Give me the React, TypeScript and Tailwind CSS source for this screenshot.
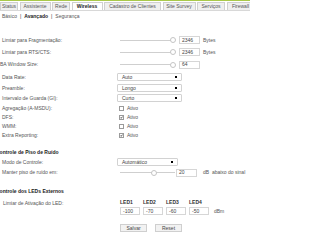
import React from "react";

const tabs = [
  { label: "Status", w: "w-[18px]" },
  { label: "Assistente", w: "w-[31px]" },
  { label: "Rede", w: "w-[18px]" },
  { label: "Wireless", w: "w-[31px]", active: true },
  { label: "Cadastro de Clientes", w: "w-[57px]" },
  { label: "Site Survey", w: "w-[33px]" },
  { label: "Serviços", w: "w-[28px]" },
  { label: "Firewall", w: "w-[28px]" },
];

const Slider = ({ pos, width }: { pos: number; width: string }) => (
  <div className={`relative flex h-[6px] items-center ${width}`}>
    <div className="h-px w-full bg-[#cfcfcf]" />
    <div
      className="absolute top-0 h-[6px] w-[6px] -translate-x-1/2 rounded-full border border-[#c4c4c4] bg-white"
      style={{ left: `${pos}%` }}
    />
  </div>
);

const Box = ({ value, w = "w-[21px]" }: { value: string; w?: string }) => (
  <div className={`flex h-[8px] items-center border border-[#d6d6d6] bg-white px-[2px] text-[#444] ${w}`}>
    {value}
  </div>
);

const Select = ({ value, w = "w-[65px]" }: { value: string; w?: string }) => (
  <div className={`flex h-[8px] items-center justify-between rounded-[1px] border border-[#d2d2d2] bg-white pl-[4px] pr-[4px] text-[#444] ${w}`}>
    <span>{value}</span>
    <span className="h-[2px] w-[2px] bg-black" />
  </div>
);

const Check = ({ checked }: { checked?: boolean }) => (
  <div className="flex h-[5px] w-[5px] items-center justify-center border border-[#9a9a9a] bg-white">
    {checked && (
      <svg viewBox="0 0 6 6" className="h-[5px] w-[5px]">
        <path d="M1 3.2 L2.4 4.6 L5 1.2" stroke="#111" strokeWidth="1.4" fill="none" />
      </svg>
    )}
  </div>
);

const Row = ({ label, h, children, shift }: { label: string; h: string; children?: React.ReactNode; shift?: boolean }) => (
  <div className={`flex items-center ${h}`}>
    <div className={`w-[117px] shrink-0 ${shift ? "pl-0" : "pl-[2px]"}`}>{label}</div>
    <div className="flex items-center">{children}</div>
  </div>
);

export default function App() {
  return (
    <div className="h-[236px] w-[250px] overflow-hidden bg-white text-[5px] leading-none text-[#555] [font-family:'Liberation_Sans',Arial,sans-serif]">
      <div className="h-px bg-[#a9c94a]" />
      <div className="flex h-[10px] items-stretch gap-[1.5px] border-b border-[#d8d8d8] pt-px">
        {tabs.map((t) => (
          <div
            key={t.label}
            className={`flex shrink-0 items-center justify-center border border-b-0 border-[#d0d0d0] whitespace-nowrap ${t.w} ${
              t.active ? "bg-white font-bold text-[#222]" : "bg-[#efefef] text-[#555]"
            }`}
          >
            {t.label}
          </div>
        ))}
      </div>

      <div className="flex h-[10px] items-center gap-[3px] pl-[2px]">
        <span>Básico</span>
        <span className="text-[#333]">|</span>
        <span className="font-bold text-[#222]">Avançado</span>
        <span className="text-[#333]">|</span>
        <span>Segurança</span>
      </div>

      <div className="h-[13px]" />

      <Row label="Limiar para Fragmentação:" h="h-[12px]">
        <div className="ml-[3px]"><Slider pos={100} width="w-[53px]" /></div>
        <div className="ml-[6px]"><Box value="2346" /></div>
        <span className="ml-[3px]">Bytes</span>
      </Row>
      <Row label="Limiar para RTS/CTS:" h="h-[12px]">
        <div className="ml-[3px]"><Slider pos={100} width="w-[53px]" /></div>
        <div className="ml-[6px]"><Box value="2346" /></div>
        <span className="ml-[3px]">Bytes</span>
      </Row>
      <Row label="BA Window Size:" h="h-[13px]" shift>
        <div className="ml-[3px]"><Slider pos={100} width="w-[53px]" /></div>
        <div className="ml-[6px]"><Box value="64" /></div>
      </Row>
      <Row label="Data Rate:" h="h-[12px]">
        <Select value="Auto" />
      </Row>
      <Row label="Preamble:" h="h-[10px]">
        <Select value="Longo" />
      </Row>
      <Row label="Intervalo de Guarda (GI):" h="h-[10px]">
        <Select value="Curto" />
      </Row>
      <Row label="Agregação (A-MSDU):" h="h-[10px]">
        <div className="ml-[2px] flex items-center gap-[3px]"><Check /><span>Ativo</span></div>
      </Row>
      <Row label="DFS:" h="h-[9px]">
        <div className="ml-[2px] flex items-center gap-[3px]"><Check checked /><span>Ativo</span></div>
      </Row>
      <Row label="WMM:" h="h-[9px]">
        <div className="ml-[2px] flex items-center gap-[3px]"><Check /><span>Ativo</span></div>
      </Row>
      <Row label="Extra Reporting:" h="h-[9px]">
        <div className="ml-[2px] flex items-center gap-[3px]"><Check checked /><span>Ativo</span></div>
      </Row>

      <div className="mt-[7px] flex h-[10px] items-center pl-[0px] font-bold text-[#222] -ml-[4px]">
        Controle de Piso de Ruído
      </div>
      <Row label="Modo de Controle:" h="h-[10px]">
        <Select value="Automático" w="w-[61px]" />
      </Row>
      <Row label="Manter piso de ruído em:" h="h-[11px]">
        <div className="ml-[3px]"><Slider pos={62} width="w-[55px]" /></div>
        <div className="ml-[1px]"><Box value="20" /></div>
        <span className="ml-[6px]">dB &nbsp;abaixo do sinal</span>
      </Row>

      <div className="mt-[8px] flex h-[10px] items-center font-bold text-[#222] -ml-[4px]">
        Controle dos LEDs Externos
      </div>
      <div className="mt-[2px] flex">
        <div className="w-[117px] shrink-0 pl-[3px] pt-[3px]">Limiar de Ativação do LED:</div>
        <div className="ml-[3px] flex flex-col">
          <div className="flex h-[9px] items-center gap-[3px] font-bold text-[#333]">
            <span className="w-[20px]">LED1</span>
            <span className="w-[20px]">LED2</span>
            <span className="w-[20px]">LED3</span>
            <span className="w-[20px]">LED4</span>
          </div>
          <div className="flex items-center gap-[3px]">
            <Box value="-100" w="w-[20px]" />
            <Box value="-70" w="w-[20px]" />
            <Box value="-60" w="w-[20px]" />
            <Box value="-50" w="w-[20px]" />
            <span className="ml-[2px]">dBm</span>
          </div>
          <div className="mt-[9px] flex gap-[8px]">
            <div className="flex h-[8px] w-[27px] items-center justify-center border border-[#cfcfcf] bg-[#f2f2f2] text-[#444]">Salvar</div>
            <div className="flex h-[8px] w-[27px] items-center justify-center border border-[#cfcfcf] bg-[#f2f2f2] text-[#444]">Reset</div>
          </div>
        </div>
      </div>
    </div>
  );
}
